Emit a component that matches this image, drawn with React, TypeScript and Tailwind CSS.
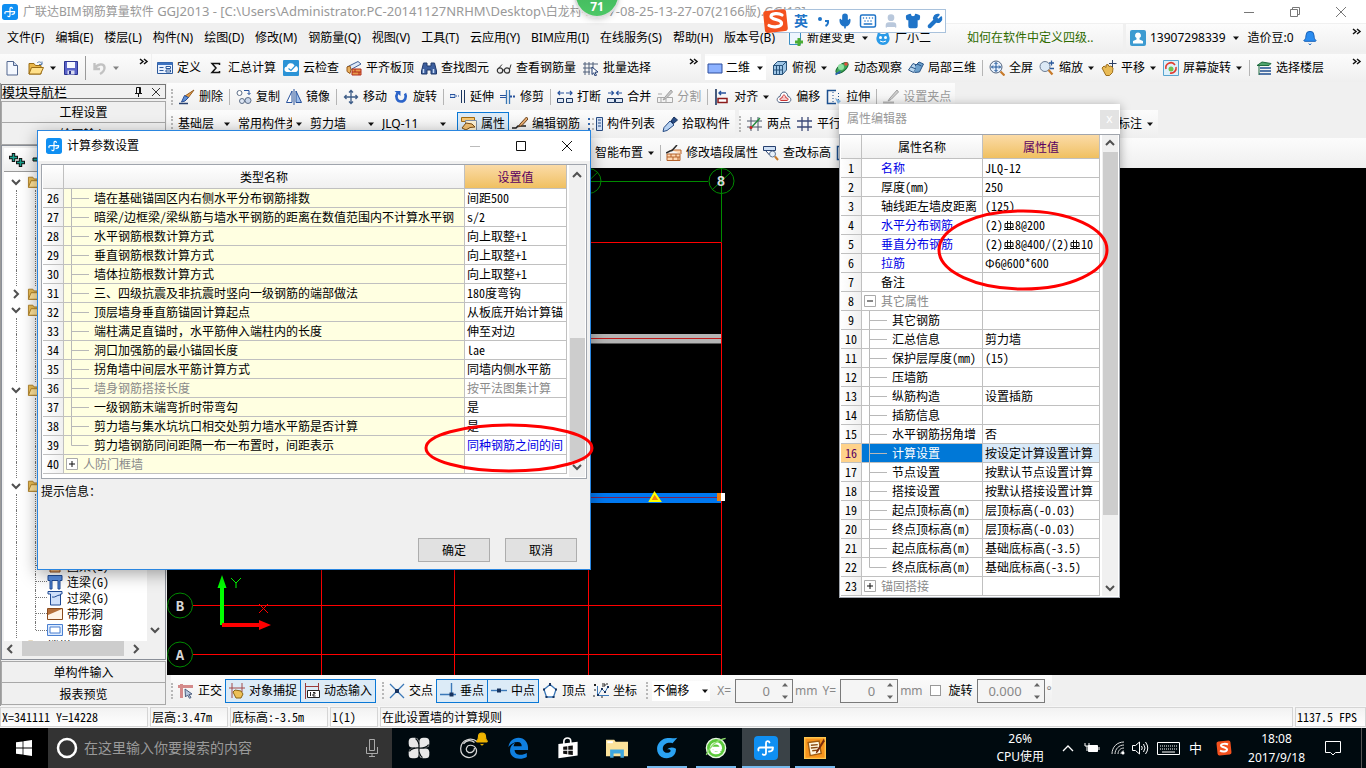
import type { ReactNode } from "react";
import { Mic, Shirt, Wrench, Keyboard, User, Bell } from "lucide-react";

const SONG = "font-['Noto_Sans_Mono_CJK_SC','Noto_Sans_CJK_SC',monospace]";

/* 16x16 toolbar glyphs */
const icons: Record<string, ReactNode> = {
  doc: <><path d="M3 1.500h6.500l4 4v9.500H3z" fill="#f4f8ff" stroke="#52678f" /><path d="M9.500 1.500v4h4" fill="#c8d6ee" stroke="#52678f" /></>,
  folder: <><path d="M1 3.500h5l1.500 2H13V14H1z" fill="#e8b64a" stroke="#9a6c14" /><path d="M3.500 7.500h12L12.500 14H1z" fill="#ffe08a" stroke="#9a6c14" /><path d="M9 3c2-2 4-1 5 1m0-2.500V4.500h-3" fill="none" stroke="#5a7fae" /></>,
  branch: <><path d="M.5 2.500h5l1.500 2h6V14H.5z" fill="#e9bd55" stroke="#a87a22" /><path d="M3.500 6.500h12L12.500 14H.5z" fill="#ffe39a" stroke="#a87a22" /></>,
  save: <><path d="M1.500 1.500h13v13h-13z" fill="#5a63c8" stroke="#2b3390" /><path d="M4 2h8v6H4z" fill="#f6f8ff" /><path d="M4.500 10.500h7v4h-7z" fill="#d8dcf0" /><path d="M6 11h2v3H6z" fill="#2b3390" /></>,
  undo: <path d="M2.500 3v6h5.500M3 8.500c2-5 9-5.500 9.500-1 .3 3-2 5-4.500 6.500" fill="none" stroke="#c2c2c2" strokeWidth="2.400" />,
  define: <><path d="M.5 2.500h15v11H.5z" fill="#eaf2ff" stroke="#2d5a9c" /><path d="M.5 2.500h15v2.500H.5z" fill="#3e73c0" /><path d="M2.500 7.500h4m-4 3h4" stroke="#2d5a9c" /><path d="M9 6.500h4.500v2H9zM9 10h4.500v2H9z" fill="#fff" stroke="#2d5a9c" /></>,
  sigma: <path d="M11.500 5V3.500H4L8 8l-4 4.500h7.500V11" fill="none" stroke="#111" strokeWidth="1.500" />,
  cloud: <><rect width="16" height="16" rx="1" fill="#2b93d6" /><path d="M3.500 12a2.800 2.800 0 0 1 .4-5.500 4 4 0 0 1 7.600-.8A3.200 3.200 0 0 1 12.500 12z" fill="#fff" /><path d="M5.500 8.500l2.500 2L14 4" fill="none" stroke="#2b93d6" strokeWidth="1.200" /></>,
  slab: <><path d="M1 7L12 1.500 15 4 5 9.500z" fill="#dfe9f7" stroke="#3f5f96" /><path d="M6 9h9v6H6z" fill="#e79a4a" stroke="#b22a1c" /><path d="M6 12h9m-6-3v3m4 0v3" stroke="#b22a1c" /><path d="M1 7l3-1 1 3.500-1 4-3-2z" fill="#e8b060" stroke="#9a5c1c" /></>,
  binoculars: <><path d="M2.500 3h3.500v3h4V3h3.500l2 8v3h-5.500v-4H6v4H.5v-3z" fill="#3d5f9e" stroke="#213a6b" /><path d="M2.500 9v4m10-4v4" stroke="#c7d9f5" strokeWidth="1.500" /></>,
  glasses: <><circle cx="4" cy="10.500" r="2.700" fill="#eee" stroke="#333" strokeWidth="1.200" /><circle cx="11" cy="10.500" r="2.700" fill="#eee" stroke="#333" strokeWidth="1.200" /><path d="M6.500 10h2M2 9l4-4.500M13.500 9.500L15 4.500" stroke="#333" /></>,
  batch: <><path d="M2 2v13M6 2v13M10 2v7M0 4h15M0 8h10M0 12h7" stroke="#50607a" /><path d="M9 7l6 5-3 .3 1.500 3-1.500.6-1.300-3L9 14.500z" fill="#fff" stroke="#1f3a70" /></>,
  rect: <path d="M1 4h14v9H1z" fill="#8db2ff" stroke="#2c4c9c" />,
  cube: <><path d="M1.500 5.500L5.500 1.500h9v8.500l-4 4.500h-9z" fill="#9fc6e6" stroke="#27527a" /><path d="M1.500 5.500h9v9M10.500 5.500l4-4M4.500 5.500v9m3-9v9M1.500 10h9" fill="none" stroke="#27527a" /></>,
  orbit: <><ellipse cx="8" cy="8" rx="7.500" ry="3.500" transform="rotate(-40 8 8)" fill="#3fa85a" stroke="#1a6a32" /><circle cx="7" cy="7" r="3" fill="#8fe0a0" /><path d="M1.500 14.500l5-3" stroke="#2b61ad" strokeWidth="2" /><circle cx="12" cy="4" r="1.800" fill="#e34b3c" /></>,
  local3d: <><path d="M.5 10L5 3.500l5 2-4.500 7z" fill="#b9d6ef" stroke="#2b5687" /><path d="M7 6l4-4 4.500 2-4 8-5 .5" fill="#6da0cc" stroke="#2b5687" /><path d="M3 7l5 2m1-5l4.500 2" stroke="#2b5687" /></>,
  full: <><circle cx="7" cy="7" r="6" fill="#e7f0fb" stroke="#53657f" /><path d="M7 2.500v9M2.500 7h9M5.500 4L7 2.500 8.500 4m-3 6L7 11.500 8.500 10M4 5.500L2.500 7 4 8.500m6-3L11.500 7 10 8.500" fill="none" stroke="#1c5599" /><path d="M11.500 11.500l4 4" stroke="#c77a2a" strokeWidth="2.200" /></>,
  zoom: <><circle cx="6" cy="6.500" r="5" fill="#dbe9f6" stroke="#6a7b92" /><path d="M9.500 10l4 4.500" stroke="#c77a2a" strokeWidth="2.200" /><path d="M10 3h5m-2.500-2.500v5M11 8.500h4" stroke="#2b5a9c" strokeWidth="1.300" /></>,
  hand: <><path d="M1 8l2-2 2 1.500V5l2-.5 1 2 2-.5 2 2-.5 4.500-3 3H5z" fill="#e9bb55" stroke="#9d6e1c" /><path d="M11.500 0v7M8 3.500h7.500" stroke="#2d3f63" /></>,
  screenrot: <><path d="M.5.5h15v15H.5z" fill="#dff0fa" stroke="#58a5d0" /><path d="M3 9a5 5 0 0 1 9-4M13 7a5 5 0 0 1-6 6" fill="none" stroke="#e03b2e" strokeWidth="1.600" /><circle cx="8" cy="9" r="2.500" fill="#72c24f" /></>,
  floors: <><path d="M1 5.500L6 2l9 1.500-2 2z" fill="#4ea36c" stroke="#1f6b40" /><path d="M4 8h11M4 11h11M3 14h12" stroke="#1f4f90" strokeWidth="1.600" /><path d="M3 6v9" stroke="#1f6b40" /></>,
  del: <><path d="M15 1l-6 8-3-2z" fill="#e6a14c" stroke="#945c20" /><path d="M9.500 8.500L6 12 2.500 13 5.500 6.500z" fill="#5d8ed6" stroke="#2b4f94" /><path d="M0 14.500h9" stroke="#27406f" strokeWidth="1.500" /></>,
  copy: <><circle cx="3.500" cy="4" r="2.500" fill="#fff" stroke="#5d6e88" /><circle cx="6" cy="12" r="2.500" fill="#dfe8f5" stroke="#5d6e88" /><circle cx="12" cy="11.500" r="3" fill="#c9d6ea" stroke="#5d6e88" /><path d="M8 1.500h5v4m-1.500-1.500L13 5.500 14.500 4" fill="none" stroke="#27529c" /></>,
  mirror: <><path d="M6 2v11.500H.5z" fill="#fff" stroke="#27529c" /><path d="M10 2v11.500h5.500z" fill="#9dbde9" stroke="#27529c" /><path d="M8 0v16" stroke="#27529c" /></>,
  move: <path d="M8 1.500v13M1.500 8h13M6 3.500l2-2 2 2m-4 9l2 2 2-2M3.500 6l-2 2 2 2m9-4l2 2-2 2" fill="none" stroke="#3d5c87" strokeWidth="1.300" />,
  rotate: <><path d="M4.500 4C2 8 4 12.500 8 12.500s6-4.500 4-8" fill="none" stroke="#2c64c9" strokeWidth="2.600" /><path d="M1.500 2h6v5z" fill="#2c64c9" /></>,
  extend: <><path d="M0 5.500h5v3H0z" fill="#dbe7f7" stroke="#27529c" /><path d="M6 7h4" stroke="#27529c" strokeDasharray="1 1" /><path d="M11.500 1v13M14.500 1v13" stroke="#1b355f" /></>,
  trim: <><path d="M0 6.500h6m0 2H0" stroke="#27529c" /><path d="M6.500 1v14M9.500 1v14" stroke="#3a78b5" strokeWidth="1.300" /><path d="M10 7.500h6" stroke="#27529c" strokeWidth="2" strokeDasharray="2 1" /></>,
  break: <><path d="M1 4h6m2 0h6M3 2L1 4l2 2m10-4l2 2-2 2" fill="none" stroke="#27529c" strokeWidth="1.200" /><path d="M.5 9.500h6v4h-6zM9.500 9.500h6v4h-6z" fill="#dfe8f5" stroke="#1b355f" /></>,
  join: <><path d="M1 4h5m4 0h5M4.500 2l2 2-2 2m7-4l-2 2 2 2" fill="none" stroke="#27529c" strokeWidth="1.200" /><path d="M.5 9.500h7v4h-7zM8.500 9.500h7v4h-7z" fill="#dfe8f5" stroke="#1b355f" /></>,
  split: <><path d="M.5 8.500h15v5H.5zM4 8.500v5m5-5v5M1 5h4" fill="none" stroke="#a9a9a9" /><path d="M14 1L8 8l-2 3 3-1.500L15.500 3z" fill="#c9c9c9" stroke="#a0a0a0" /></>,
  align: <><path d="M2 0v16" stroke="#1b355f" strokeWidth="1.600" /><path d="M4 9.500h9v4H4z" fill="#fff" stroke="#8b1a1a" strokeWidth="1.500" /><path d="M12 4H5m2-2L5 4l2 2" fill="none" stroke="#27529c" strokeWidth="1.400" /></>,
  offset: <><path d="M4 13.500C0 13 .5 8 4 7.500 5 1.500 11 1.500 12 7.500c3.500.5 4 5.500 0 6z" fill="#fff" stroke="#4b5f80" /><path d="M5 11.500c-2-.5-1-3 1-2.500.5-4 3.500-4 4 0 2-.5 3 2 1 2.500z" fill="#f6c6c6" stroke="#cb3333" /></>,
  stretch: <><path d="M10 1.500H1.500v13H10" fill="none" stroke="#1b4f8f" strokeWidth="1.500" /><path d="M7 3v11M12.500 4v10" stroke="#1b4f8f" strokeDasharray="1 2" /><path d="M9 9l6 3-3 3z" fill="#7db0dd" /></>,
  grip: <><path d="M14 1L7 9l-2 3 3-1.500L15.500 3z" fill="#cfcfcf" stroke="#a0a0a0" /><path d="M0 13.500h11" stroke="#b5b5b5" strokeWidth="2" /></>,
  props: <><path d="M.5 1.500h13v4H.5z" fill="#f7c873" stroke="#a36a10" /><path d="M4.500 4.500h11v10h-11z" fill="#fff3d5" stroke="#7d8ea6" /><path d="M1 12l4-5 6 1 3 3-5 .5-4 2.500z" fill="#f3c173" stroke="#7a4c12" /></>,
  editbar: <><path d="M0 12h4l2-2h8" fill="none" stroke="#1d1d1d" strokeWidth="1.600" /><path d="M14.500 1L8 8l-1.500 3L10 9.500 16 3z" fill="#e8ad70" stroke="#6d4520" /></>,
  list: <><path d="M1 2h2v2H1zM1 7h2v2H1zM1 12h2v2H1z" fill="#3467ad" /><path d="M5 3h2m-2 5h2m-2 5h2" stroke="#888" /><path d="M9.500 1.500h6v13h-6z" fill="#d3e1f5" stroke="#274b83" /><path d="M11 4h3m-3 3h3m-3 3h3" stroke="#274b83" /></>,
  picker: <><path d="M9 5l3-4 3.500 3-4 3.500z" fill="#274b83" stroke="#16305c" /><path d="M8 5l4 4-7 5.500-4 1 1-4z" fill="#b7d2f2" stroke="#274b83" /></>,
  twopt: <><path d="M4 1v14M11 1v14M0 5h15M0 11h15" stroke="#4a5568" /><path d="M3 13L13 2" stroke="#258a3e" strokeWidth="1.500" /><circle cx="4" cy="11.500" r="1.500" fill="#c22" /></>,
  parallel: <path d="M5 1v14M11 1v14M0 5h15M0 11h15" stroke="#3d4a78" strokeWidth="1.300" />,
  wall: <><path d="M1 9h13v6.500H1zM5 5h10v4" fill="#ffd8b2" stroke="#b5622c" /><path d="M1 12h13M5 9v3m5-3v3m-3 0v3m5-3v3" stroke="#b5622c" /><path d="M11 0L6 5.500l-2 .5L0 8" fill="none" stroke="#2b2b2b" strokeWidth="1.500" /></>,
  level: <><path d="M.5 1.500h12v4h-12z" fill="#cfe0f5" stroke="#27406f" /><path d="M3 6l3.500 4L10 6" fill="#fff" stroke="#27406f" /><circle cx="9.500" cy="9" r="3" fill="#e8f1fb" stroke="#5f7492" /><path d="M12 11.500l3 3.500" stroke="#c77a2a" strokeWidth="2" /></>,
  newchange: <><path d="M2.500 1.500h11v13h-11z" fill="#eef6ff" stroke="#3b8fc4" /><path d="M8 10.500h2.500V8h3v2.500H16v3h-2.500V16h-3v-2.500H8z" fill="#4cae34" /></>,
  mascot: <><path d="M2 6l1-4 3 2h4l3-2 1 4c2 4-1 9-6 9S0 10 2 6z" fill="#2b9be8" /><circle cx="5.500" cy="7.500" r="1.500" fill="#fff" /><circle cx="10.500" cy="7.500" r="1.500" fill="#fff" /><path d="M5 11q3 2 6 0" stroke="#fff" fill="none" /></>,
  account: <><rect width="16" height="16" rx="2" fill="#3d9bd1" /><path d="M8 2.500a3 3 0 0 1 1.500 5.600V9.500L13 11v2.500H3V11l3.500-1.500V8.100A3 3 0 0 1 8 2.500z" fill="#fff" /></>,
  ortho: <><path d="M3.500 1v14M0 3.500h15" stroke="#d48a8a" strokeWidth="3" /><path d="M7 6l7 5-3 .5 2 3-1.500.8L9.500 12 7.500 14z" fill="#b7c7de" stroke="#4c5e7e" /></>,
  snap: <><path d="M3 0v15M13 0v9M0 5h16" stroke="#a34a4a" /><path d="M4 9l2-2 6 1 2 3-2 4H7z" fill="#edc056" stroke="#8a6414" /></>,
  dyn: <><path d="M1.500 0v16M14.500 0v7M1 3.500h14" stroke="#9b3b3b" /><path d="M3.500 7.500h12v7h-12z" fill="#fff" stroke="#222" /><path d="M6.500 9v4M9 9.500h2v1.500H9V13h2.500" fill="none" stroke="#222" /></>,
  cross: <><path d="M1 1l14 14M15 1L1 15" stroke="#3b78b8" strokeWidth="1.300" /><path d="M6 6h4v4H6z" fill="#17335f" /></>,
  perp: <><path d="M0 11.500h16M11.500 0v11" stroke="#3b78b8" strokeWidth="1.400" /><path d="M9.500 9.500h4v4h-4z" fill="#17335f" /></>,
  mid: <><path d="M0 7.500h16" stroke="#3b78b8" strokeWidth="1.400" /><path d="M6 5.500h4v4H6z" fill="#17335f" /></>,
  vertex: <><path d="M8 1.500l6 5-2.500 7.500h-7L2 6.500z" fill="#fff" stroke="#3b78b8" strokeWidth="1.300" /><path d="M7 0h2v3H7zM13 5.500h2v2h-2zM1 5.500h2v2H1zM3.500 13h2v2h-2zM10.500 13h2v2h-2z" fill="#17335f" /></>,
  coord: <><path d="M4.500 3v9.500H16M5 12l4-6 3 3 3-5" fill="none" stroke="#3b78b8" /><path d="M1 1l2 2M3 1L1 3M9 1h3v2H9M1 7h2M0 13h2M13 1h2M8 14h2" stroke="#222" /><path d="M4 11h2v2H4zM8 5h2v2H8zM11 8h2v2h-2zM14 3h2v2h-2z" fill="#17335f" /></>,
  edge: <path d="M1 7.300C1.600 3 4.600.5 8.300.5c4.400 0 7 3.300 7 7.300v1.600H5.500c.2 2.400 2 3.500 4.300 3.500 1.700 0 3.300-.5 4.600-1.300v3c-1.400.8-3.200 1.300-5.200 1.300-4 0-7-2.400-7-6 0-2.700 1.500-4.800 3.700-5.800-.7.900-1 1.800-1.100 2.700h5.900c0-2-.9-3.200-2.900-3.200C5 3.600 2.600 5.100 1 7.300z" fill="#0f7fe0" />,
  store: <><path d="M1 5l14-1.500v10L1 15.500z" fill="#fff" /><path d="M5 5V3c0-3 5-3 5 0v1.500" fill="none" stroke="#fff" strokeWidth="1.200" /><path d="M4.500 7l3-.3v2.600h-3zM8.200 6.600l3.300-.4v3.100H8.200zM4.500 10h3v2.600l-3-.4zM8.200 10h3.300v3.100l-3.300-.4z" fill="#111" /></>,
  explorer: <><path d="M0 2h6l1 1.500h9V14H0z" fill="#fbe29a" /><path d="M1 3h4v1.500H1z" fill="#fff" /><path d="M3 9h10v6h-2.500v-3h-5v3H3z" fill="#3ea6dd" /></>,
  fan: <><g fill="#e8e8e8"><rect x=".5" y=".5" width="7.200" height="7.200" rx="2.800" /><rect x="8.300" y=".5" width="7.200" height="7.200" rx="2.800" /><rect x=".5" y="8.300" width="7.200" height="7.200" rx="2.800" /><rect x="8.300" y="8.300" width="7.200" height="7.200" rx="2.800" /><path d="M5 5h6v6H5z" /></g><path d="M8 8C8.500 5 7 2 5.500 1M8 8c3 .5 6-1 7-2.500M8 8c-.5 3 1 6 2.500 7M8 8c-3-.5-6 1-7 2.500" fill="none" stroke="#0a1215" strokeWidth=".9" /></>,
  swirl: <path d="M14 3.500C10 0 2.500 1.500 2 8s6 8.500 10 5.500c3-3 1-7.500-3-7.500-3 0-4 4-1.500 5M12 8c0 3-3 4-5 3M4 5c2-3 6-3 8-1" fill="none" stroke="#d8d8d8" strokeWidth=".9" />,
  browserG: <path d="M15.500.5C11 1.500 9 0 5.500 1.500-.5 4.500-.5 12 4 14.500c4.500 2.500 11 0 10.500-6-2.500-1.500-5-1-6.500.5 2-.5 3 .5 2.500 1.500-1 1.500-5 1.500-5.500-1.500C4.500 5 9 3.500 12 4.500z" fill="#2aa2f2" />,
  browserE: <><circle cx="8" cy="8" r="7" fill="#5cc93c" stroke="#e9f7e4" /><path d="M12 9.500H6M4.500 8a3.500 3.500 0 0 1 7 0h-7c0 4 4 4.500 6.500 2.500" fill="none" stroke="#fff" strokeWidth="1.800" /><path d="M1 13C4 6 9 2 15 1" stroke="#8fe070" fill="none" /></>,
  notes: <><path d="M.5.5h15v15H.5z" fill="#f7941d" stroke="#ffc64d" /><path d="M3 4l8-1 1.500 9-8 1.500z" fill="#fff7e0" stroke="#a05c10" /><path d="M5 6l5-.5M5 8l5-.5M6 10l4-.5" stroke="#8a4a10" /><path d="M14.500 1L9 10l-.5 2L10 11l5-8z" fill="#7a2d0c" /></>,
};

function Icon({ name, className = "size-4" }: { name: string; className?: string }) {
  return (
    <svg viewBox="0 0 16 16" fill="none" className={`shrink-0 ${className}`} aria-hidden="true">
      {icons[name]}
    </svg>
  );
}

function AppLogo({ className = "size-4" }: { className?: string }) {
  return (
    <svg viewBox="0 0 24 24" className={`shrink-0 ${className}`} aria-hidden="true">
      <rect width="24" height="24" rx="4" fill="#0f8ff2" />
      <path d="M15.500 6.500c-.5-2-3.500-2-3.500.5v10c0 2-2 2.500-3.200 1.300M19 11.500H6.500c-2 0-2.500 1.500-2 3M19 11.500c0 2.500-1.500 4-4 4" fill="none" stroke="#fff" strokeWidth="1.800" strokeLinecap="round" />
    </svg>
  );
}

function Caret() {
  return (
    <svg viewBox="0 0 8 8" className="size-2 shrink-0" aria-hidden="true">
      <path d="M1 2.500h6L4 6z" fill="#111" />
    </svg>
  );
}

function More() {
  return (
    <svg viewBox="0 0 10 8" className="mb-3 h-2 w-2.5 shrink-0" aria-hidden="true">
      <path d="M1 1l3 2.500L1 6M5 1l3 2.500L5 6" fill="none" stroke="#111" strokeWidth="1.500" />
    </svg>
  );
}

function Chevron({ dir = "up" }: { dir?: "up" | "down" | "left" | "right" }) {
  const d = { up: "M2 8l4-4 4 4", down: "M2 4l4 4 4-4", left: "M8 2L4 6l4 4", right: "M4 2l4 4-4 4" }[dir];
  return (
    <svg viewBox="0 0 12 12" className="size-3 shrink-0" aria-hidden="true">
      <path d={d} fill="none" stroke="#505050" strokeWidth="2" />
    </svg>
  );
}

const Sep = () => <span className="h-4 w-px shrink-0 bg-[#b5b5b5]" />;

const Grip = () => <span className="h-4 w-0 shrink-0 border-l-2 border-dotted border-[#b8b8b8]" />;

type ToolProps = { icon?: string; label: string; caret?: boolean; off?: boolean; on?: boolean };

function Tool({ icon, label, caret, off, on }: ToolProps) {
  return (
    <button
      disabled={off}
      className={`flex shrink-0 items-center gap-1 whitespace-nowrap ${off ? "text-[#9a9a9a]" : ""} ${
        on ? "-mx-1 h-6 border border-[#0a78d6] bg-[#dcebf7] px-[3px]" : ""
      }`}
    >
      {icon && <Icon name={icon} />}
      {label}
      {caret && <Caret />}
    </button>
  );
}

function Combo({ label, value, className }: { label: string; value: string; className: string }) {
  return (
    <label className={`relative flex h-5 shrink-0 items-center ${className}`}>
      <select aria-label={label} className="w-full appearance-none overflow-hidden bg-transparent pr-3 leading-5 outline-none">
        <option>{value}</option>
      </select>
      <span className="pointer-events-none absolute right-px">
        <Caret />
      </span>
    </label>
  );
}

const band = "bg-linear-to-b from-[#fcfcfc] to-[#efefef]";

const menus = [
  "文件(F)", "编辑(E)", "楼层(L)", "构件(N)", "绘图(D)", "修改(M)", "钢筋量(Q)", "视图(V)", "工具(T)",
  "云应用(Y)", "BIM应用(I)", "在线服务(S)", "帮助(H)", "版本号(B)",
];

function TitleBar() {
  return (
    <header className="flex h-[23px] items-center bg-white pl-[2px] text-[#999]">
      <AppLogo />
      <h1 className="ml-[5px] flex-1 truncate">
        广联达BIM钢筋算量软件
        <span className="text-[13px]"> GGJ2013 - [C:\Users\Administrator.PC-20141127NRHM\Desktop\</span>
        白龙村
        <span className="text-[13px]">-2017-08-25-13-27-07(2166</span>版<span className="text-[13px]">).GGJ12]</span>
      </h1>
      <div className="flex gap-9 pr-5">
        <button aria-label="最小化"><svg viewBox="0 0 10 10" className="size-2.5"><path d="M0 5.500h10" stroke="#777" /></svg></button>
        <button aria-label="还原"><svg viewBox="0 0 10 10" className="size-2.5"><path d="M.5 2.500h7v7h-7zM2.500 2.500v-2h7v7h-2" fill="none" stroke="#777" /></svg></button>
        <button aria-label="关闭"><svg viewBox="0 0 10 10" className="size-2.5"><path d="M0 0l10 10M10 0L0 10" stroke="#777" /></svg></button>
      </div>
    </header>
  );
}

function MenuBar() {
  return (
    <nav className="flex h-[30px] items-center overflow-hidden">
      <div className="flex gap-[11px] pl-[7px]">
        {menus.map((m) => (
          <button key={m} className="whitespace-nowrap">{m}</button>
        ))}
      </div>
      <div className={`ml-3 flex h-7 flex-none items-center gap-[6px] pr-2 ${band}`}>
        <Tool icon="newchange" label="新建变更" />
        <Caret />
        <Tool icon="mascot" label="广小二" />
      </div>
      <div className={`flex h-7 flex-1 items-center pl-7 ${band}`}>
        <a href="#help" className="whitespace-nowrap text-[#2f6b00]">如何在软件中定义四级..</a>
      </div>
      <div className={`ml-[3px] flex h-7 w-[240px] items-center pl-1 ${band}`}>
        <Tool icon="account" label="13907298339" />
        <span className="ml-[6px]"><Caret /></span>
        <span className="ml-2 whitespace-nowrap">造价豆:0</span>
        <Bell className="ml-2 size-4 fill-[#2a8cf0] text-[#1b63b8]" strokeWidth={1.500} />
        <span className="ml-auto mr-1"><More /></span>
      </div>
    </nav>
  );
}

function MainToolbar() {
  return (
    <div className="flex h-[30px] items-center overflow-hidden">
      <div className={`flex h-7 w-[151px] shrink-0 items-center pl-1 ${band}`}>
        <button aria-label="新建"><Icon name="doc" /></button>
        <button aria-label="打开" className="ml-2"><Icon name="folder" /></button>
        <span className="ml-[5px]"><Caret /></span>
        <button aria-label="保存" className="ml-[6px]"><Icon name="save" /></button>
        <span className="ml-[6px] h-6 w-px bg-[#999]" />
        <button aria-label="撤销" className="ml-[6px]"><Icon name="undo" /></button>
        <span className="ml-1 opacity-50"><Caret /></span>
        <span className="ml-auto mr-[2px]"><More /></span>
      </div>
      <div className={`ml-px flex h-7 w-[549px] shrink-0 items-center gap-[7px] pl-[5px] ${band}`}>
        <Tool icon="define" label="定义" />
        <Tool icon="sigma" label="汇总计算" />
        <Tool icon="cloud" label="云检查" />
        <Tool icon="slab" label="平齐板顶" />
        <Tool icon="binoculars" label="查找图元" />
        <Tool icon="glasses" label="查看钢筋量" />
        <Tool icon="batch" label="批量选择" />
        <span className="ml-auto mr-[2px]"><More /></span>
      </div>
      <div className={`ml-1 flex h-7 flex-1 items-center gap-[6px] ${band}`}>
        <label className="relative flex h-6 w-[61px] items-center bg-white pl-[2px]">
          <Icon name="rect" />
          <select aria-label="视图模式" className="w-full appearance-none bg-transparent pl-[3px] outline-none">
            <option>二维</option>
          </select>
          <span className="pointer-events-none absolute right-[2px]"><Caret /></span>
        </label>
        <Tool icon="cube" label="俯视" caret />
        <Tool icon="orbit" label="动态观察" />
        <Tool icon="local3d" label="局部三维" />
        <Sep />
        <Tool icon="full" label="全屏" />
        <Tool icon="zoom" label="缩放" caret />
        <Tool icon="hand" label="平移" caret />
        <Tool icon="screenrot" label="屏幕旋转" caret />
        <Sep />
        <Tool icon="floors" label="选择楼层" />
        <span className="ml-auto mr-1"><More /></span>
      </div>
    </div>
  );
}

/* Tree rows: o = open branch, c = closed branch, "" = row behind the dialog */
const treeRows = [
  "o", "", "", "", "", "", "", "c", "o", "", "", "", "", "o", "", "", "", "", "", "o", "", "", "", "",
  "圈梁(E)", "连梁(G)", "过梁(G)", "带形洞", "带形窗", "c楼梯",
];

function LeafIcon({ index }: { index: number }) {
  if (index >= 27) {
    return (
      <svg viewBox="0 0 16 14" className="h-3.5 w-4 shrink-0" aria-hidden="true">
        <path d="M.5 1.500h15v11H.5z" fill={index === 27 ? "#fff4e6" : "#dcebff"} stroke={index === 27 ? "#8a4a1c" : "#4a7fd0"} />
        {index === 27 ? <path d="M1 2h14L1 8z" fill="#b5703a" /> : <path d="M3 4h10v6H3z" fill="#fff" stroke="#4a7fd0" />}
      </svg>
    );
  }
  return (
    <svg viewBox="0 0 16 16" className="size-4 shrink-0" aria-hidden="true">
      {index === 24 && <path d="M3 6h10v8H3z" fill="#f0b67c" stroke="#8a4a1c" />}
      {index === 25 && <path d="M1 1.500h14v5h-2V15h-2V6.500H5V15H3V6.500H1z" fill="#5b8fe0" stroke="#1f4a94" />}
      {index === 26 && <path d="M1 1.500h14V4h-1.500v11h-10V4H1zM5 7c3 1 5-2 8-2" fill="#cfe0fb" stroke="#1f4a94" />}
    </svg>
  );
}

function Sidebar() {
  return (
    <aside className={`flex w-[167px] shrink-0 flex-col border-l border-[#9a9a9a] pr-px ${SONG}`}>
      <div className="mt-px flex h-[15px] items-center border border-[#777] pr-1">
        <span className="flex-1 text-[13px] leading-[13px]">模块导航栏</span>
        <svg viewBox="0 0 10 10" className="mr-2 size-2.5"><path d="M2 6.500h7M3.500 6V.5h4V6M6.500.5V6M5.500 7v3" fill="none" stroke="#111" /></svg>
        <svg viewBox="0 0 10 10" className="size-2.5"><path d="M1 1l8 8M9 1L1 9" stroke="#333" /></svg>
      </div>
      <button className="mt-[2px] h-[22px] border border-[#a8a8a8] bg-[#f0f0f0]">工程设置</button>
      <button className="h-[22px] border border-t-0 border-[#a8a8a8] bg-[#f0f0f0]">绘图输入</button>
      <div className="flex min-h-0 flex-1 flex-col border border-[#8a8f98] bg-[#f0f0f0] p-[2px]">
        <div className="flex h-[23px] items-center gap-[6px] bg-linear-to-b from-white to-[#eee] pl-1">
          <svg viewBox="0 0 18 16" className="h-4 w-[18px] shrink-0">
            <path d="M1 5.500h9M5.500 1v9M8 10.500h9M12.500 6v9" stroke="#111" strokeWidth="3.400" />
            <path d="M2 5.500h7M5.500 2v7M9 10.500h7M12.500 7v7" stroke="#19a08c" strokeWidth="1.500" />
          </svg>
          <svg viewBox="0 0 12 6" className="h-[6px] w-3"><path d="M1 1h10v3H1z" fill="#19a08c" stroke="#111" /></svg>
        </div>
        <div className="flex min-h-0 flex-1 border-t border-[#9a9a9a]">
          <ul className="h-[469px] min-w-0 flex-1 overflow-hidden bg-white pl-[2px] pt-[2px]">
            {treeRows.map((row, i) => {
              const branch = row.startsWith("o") || row.startsWith("c");
              return (
                <li key={i} className="flex h-4 items-center">
                  {branch ? (
                    <>
                      <span className="flex w-[21px] items-center justify-end pr-[5px]">
                        {i < 29 && <Chevron dir={row === "o" ? "down" : "right"} />}
                      </span>
                      <Icon name="branch" className="h-3.5 w-4" />
                      <span className="pl-1">{row.slice(1)}</span>
                    </>
                  ) : (
                    <>
                      <span className="ml-[10px] h-4 w-[19px] border-l border-dotted border-[#777]" />
                      <span className={`w-[12px] border-l border-dotted border-[#777] ${i === 28 ? "mb-2 h-2" : "h-4"}`}>
                        {row && <span className={`block border-t border-dotted border-[#777] ${i === 28 ? "mt-2" : "mt-[7px]"}`} />}
                      </span>
                      {row && <LeafIcon index={i} />}
                      <span className="pl-1 leading-4">{row}</span>
                    </>
                  )}
                </li>
              );
            })}
          </ul>
          <div className="flex w-4 flex-col items-center justify-between py-1">
            <Chevron />
            <Chevron dir="down" />
          </div>
        </div>
        <div className="mr-4 flex h-[17px] items-center gap-[6px]">
          <Chevron dir="left" />
          <span className="h-[15px] w-[102px] bg-[#cdcdcd]" />
          <Chevron dir="right" />
        </div>
      </div>
      <button className="mt-px h-[22px] border border-[#a8a8a8] bg-[#f0f0f0]">单构件输入</button>
      <button className="mb-px h-[22px] border border-t-0 border-[#a8a8a8] bg-[#f0f0f0]">报表预览</button>
    </aside>
  );
}

function EditToolbars() {
  return (
    <>
      <div className={`flex h-[27px] w-fit items-center gap-[6px] pl-1 pr-1 ${band}`}>
        <Grip />
        <Tool icon="del" label="删除" />
        <Sep />
        <Tool icon="copy" label="复制" />
        <Tool icon="mirror" label="镜像" />
        <Sep />
        <Tool icon="move" label="移动" />
        <Tool icon="rotate" label="旋转" />
        <Sep />
        <Tool icon="extend" label="延伸" />
        <Tool icon="trim" label="修剪" />
        <Sep />
        <Tool icon="break" label="打断" />
        <Tool icon="join" label="合并" />
        <Tool icon="split" label="分割" off />
        <Sep />
        <Tool icon="align" label="对齐" caret />
        <Tool icon="offset" label="偏移" />
        <Tool icon="stretch" label="拉伸" />
        <Sep />
        <Tool icon="grip" label="设置夹点" off />
      </div>
      <div className="flex h-[28px] items-center">
        <div className={`flex h-full w-[568px] items-center pl-1 ${band}`}>
          <Grip />
          <Combo label="楼层" value="基础层" className="ml-[5px] w-[54px]" />
          <Combo label="构件分类" value="常用构件类" className="ml-[6px] w-[66px]" />
          <Combo label="构件类型" value="剪力墙" className="ml-[6px] w-[66px]" />
          <Combo label="构件" value="JLQ-11" className="ml-[6px] w-[66px]" />
          <span className="ml-[6px]"><Sep /></span>
          <div className="ml-[7px] flex gap-[7px]">
            <Tool icon="props" label="属性" on />
            <Tool icon="editbar" label="编辑钢筋" />
            <Tool icon="list" label="构件列表" />
            <Tool icon="picker" label="拾取构件" />
          </div>
        </div>
        <div className={`ml-1 flex h-full w-[419px] items-center gap-[6px] pr-1 ${band}`}>
          <Grip />
          <Tool icon="twopt" label="两点" />
          <Tool icon="parallel" label="平行" />
          <span className="ml-auto"><Tool label="标注" caret /></span>
        </div>
      </div>
      <div className={`flex h-[30px] items-center gap-[5px] pl-[428px] ${band}`}>
        <Tool label="智能布置" caret />
        <Sep />
        <Tool icon="wall" label="修改墙段属性" />
        <Tool icon="level" label="查改标高" />
        <Tool icon="stretch" label="" />
      </div>
    </>
  );
}

/* Axis grid and the selected wall segment */
function Canvas() {
  return (
    <div className="relative min-h-0 flex-1 overflow-hidden bg-black">
      <svg className="absolute left-0 top-0" width="1199" height="507" viewBox="167 168 1199 507">
        <path d="M421 181.500h287M721.500 168v74" stroke="#008a00" fill="none" />
        <path d="M421 334h300v9.500H421z" fill="#b4b4b4" />
        <path d="M421 338.500h300" stroke="#c01818" />
        <path d="M421 493h300v10H421z" fill="#0078f0" />
        <path d="M421 497.500h300" stroke="#802050" />
        <path d="M421 242.500h300.500V675M588.500 560v115M454.500 560v115M321.500 560v115M193 605.500h528M193 654.500h528" stroke="#f00" fill="none" />
        <path d="M717 493h4v8h-4z" fill="#f08010" />
        <path d="M721 493h4v8h-4z" fill="#fff" />
        <path d="M650 501l4.500-8 5.500 8z" fill="#f08010" stroke="#ff0" strokeWidth="2" />
        <g stroke="#008a00" fill="none">
          <circle cx="721.500" cy="181" r="12.500" />
          <circle cx="588.500" cy="181" r="12.500" />
          <circle cx="180" cy="605.500" r="12.500" />
          <circle cx="180" cy="654.500" r="12.500" />
          <path d="M712 190l19-18M579 190l19-18" />
        </g>
        <g fill="#d8d8d8" fontSize="14" fontFamily="Liberation Mono, monospace" fontWeight="bold" textAnchor="middle">
          <text x="721" y="186">8</text>
          <text x="180" y="611">B</text>
          <text x="180" y="660">A</text>
        </g>
        <path d="M220 625V588h-2.500l4.500-13 4.500 13H224v37z" fill="#0f0" />
        <path d="M222 623v4h37v3l12-5-12-5v3z" fill="#f00" />
        <path d="M231 578l5 5 5-5M236 583v5" stroke="#0f0" fill="none" />
        <path d="M259 604l9 9M268 604l-9 9" stroke="#f00" fill="none" />
      </svg>
    </div>
  );
}

function Spin({ label, value, className }: { label: string; value: string; className: string }) {
  return (
    <span className={`flex h-6 items-center border border-[#7a7a7a] bg-[#f5f5f5] pr-1 ${className}`}>
      <input aria-label={label} defaultValue={value} className="w-full min-w-0 bg-transparent pr-3 text-right text-[13px] text-[#888] outline-none" />
      <svg viewBox="0 0 6 16" className="h-4 w-[6px] shrink-0"><path d="M0 3.500L3 0l3 3.500zM0 12.500L3 16l3-3.500z" fill="#666" /></svg>
    </span>
  );
}

function SnapBar() {
  return (
    <div className="flex h-[31px] items-center pl-1">
      <div className={`flex h-full items-center ${band}`}>
        <Grip />
        <div className="ml-[5px] flex gap-[7px]">
          <Tool icon="ortho" label="正交" />
          <Tool icon="snap" label="对象捕捉" on />
          <Tool icon="dyn" label="动态输入" on />
        </div>
        <span className="ml-[10px]"><Grip /></span>
        <div className="ml-[5px] flex items-center gap-[7px]">
          <Tool icon="cross" label="交点" />
          <Tool icon="perp" label="垂点" on />
          <Tool icon="mid" label="中点" on />
          <Tool icon="vertex" label="顶点" />
          <Tool icon="coord" label="坐标" />
        </div>
        <span className="ml-[9px]"><Grip /></span>
        <Combo label="偏移方式" value="不偏移" className="ml-1 w-[58px] bg-white pl-[1px]" />
        <span className="ml-1"><Sep /></span>
        <span className="ml-[3px] text-[#888]">X=</span>
        <Spin label="X 偏移" value="0" className="ml-1 w-[58px]" />
        <span className="ml-[2px] text-[#888]">mm</span>
        <span className="ml-[5px] text-[#888]">Y=</span>
        <Spin label="Y 偏移" value="0" className="ml-1 w-[58px]" />
        <span className="ml-[2px] text-[#888]">mm</span>
        <span className="ml-[3px]"><Sep /></span>
        <label className="ml-1 flex items-center gap-2">
          <input type="checkbox" className="size-[11px] appearance-none border border-[#999] bg-white" />
          旋转
        </label>
        <Spin label="旋转角度" value="0.000" className="ml-1 w-[68px]" />
        <span className="ml-[2px] text-[#888]">°</span>
      </div>
    </div>
  );
}

type Row = { n: number; name: string; value: ReactNode; kind?: "plain" | "last" | "group"; tone?: "blue" | "gray"; open?: boolean; active?: boolean };

const calcRows: Row[] = [
  { n: 26, name: "墙在基础锚固区内右侧水平分布钢筋排数", value: "间距500" },
  { n: 27, name: "暗梁/边框梁/梁纵筋与墙水平钢筋的距离在数值范围内不计算水平钢", value: "s/2" },
  { n: 28, name: "水平钢筋根数计算方式", value: "向上取整+1" },
  { n: 29, name: "垂直钢筋根数计算方式", value: "向上取整+1" },
  { n: 30, name: "墙体拉筋根数计算方式", value: "向上取整+1" },
  { n: 31, name: "三、四级抗震及非抗震时竖向一级钢筋的端部做法", value: "180度弯钩" },
  { n: 32, name: "顶层墙身垂直筋锚固计算起点", value: "从板底开始计算锚" },
  { n: 33, name: "端柱满足直锚时，水平筋伸入端柱内的长度", value: "伸至对边" },
  { n: 34, name: "洞口加强筋的最小锚固长度", value: "lae" },
  { n: 35, name: "拐角墙中间层水平筋计算方式", value: "同墙内侧水平筋" },
  { n: 36, name: "墙身钢筋搭接长度", value: <span className="text-[#8a8a8a]">按平法图集计算</span>, tone: "gray" },
  { n: 37, name: "一级钢筋末端弯折时带弯勾", value: "是" },
  { n: 38, name: "剪力墙与集水坑坑口相交处剪力墙水平筋是否计算", value: "是" },
  { n: 39, name: "剪力墙钢筋同间距隔一布一布置时，间距表示", value: <span className="text-[#0000e6]">同种钢筋之间的间</span>, kind: "last" },
  { n: 40, name: "人防门框墙", value: "", kind: "group", tone: "gray" },
];

/* HRB400 bar mark, which has no code point of its own */
const Bar = () => (
  <svg viewBox="0 0 12 12" className="inline-block size-3 align-[-2px]" role="img" aria-label="HRB400">
    <path d="M2 3.500h8v4H2zM4.500 1v9M7.500 1v9M1 9.500h10" fill="none" stroke="#111" />
  </svg>
);

const propRows: Row[] = [
  { n: 1, name: "名称", value: "JLQ-12", kind: "plain", tone: "blue" },
  { n: 2, name: "厚度(mm)", value: "250", kind: "plain" },
  { n: 3, name: "轴线距左墙皮距离", value: "(125)", kind: "plain" },
  { n: 4, name: "水平分布钢筋", value: <>(2)<Bar />8@200</>, kind: "plain", tone: "blue" },
  { n: 5, name: "垂直分布钢筋", value: <>(2)<Bar />8@400/(2)<Bar />10</>, kind: "plain", tone: "blue" },
  { n: 6, name: "拉筋", value: "Φ6@600*600", kind: "plain", tone: "blue" },
  { n: 7, name: "备注", value: "", kind: "plain" },
  { n: 8, name: "其它属性", value: "", kind: "group", tone: "gray", open: true },
  { n: 9, name: "其它钢筋", value: "" },
  { n: 10, name: "汇总信息", value: "剪力墙" },
  { n: 11, name: "保护层厚度(mm)", value: "(15)" },
  { n: 12, name: "压墙筋", value: "" },
  { n: 13, name: "纵筋构造", value: "设置插筋" },
  { n: 14, name: "插筋信息", value: "" },
  { n: 15, name: "水平钢筋拐角增", value: "否" },
  { n: 16, name: "计算设置", value: "按设定计算设置计算", active: true },
  { n: 17, name: "节点设置", value: "按默认节点设置计算" },
  { n: 18, name: "搭接设置", value: "按默认搭接设置计算" },
  { n: 19, name: "起点顶标高(m)", value: "层顶标高(-0.03)" },
  { n: 20, name: "终点顶标高(m)", value: "层顶标高(-0.03)" },
  { n: 21, name: "起点底标高(m)", value: "基础底标高(-3.5)" },
  { n: 22, name: "终点底标高(m)", value: "基础底标高(-3.5)", kind: "last" },
  { n: 23, name: "锚固搭接", value: "", kind: "group", tone: "gray" },
];

function Lead({ row }: { row: Row }) {
  if (row.kind === "plain") return <span className="w-[19px] shrink-0" />;
  if (row.kind === "group") {
    return (
      <button aria-label={row.name} className="ml-[2px] mr-[5px] size-3 shrink-0">
        <svg viewBox="0 0 12 12" className="size-3">
          <path d="M.5.500h11v11H.5z" fill="#fff" stroke="#aaa" />
          <path d={row.open ? "M3 6h6" : "M3 6h6M6 3v6"} stroke="#111" />
        </svg>
      </button>
    );
  }
  return (
    <svg viewBox="0 0 30 18" className="h-[18px] w-[30px] shrink-0" aria-hidden="true">
      <path d={row.kind === "last" ? "M7.500 0v9.500h17" : "M7.500 0v18M8 9.500h17"} fill="none" stroke="#b8b8b8" />
    </svg>
  );
}

function Grid({ rows, heads, cream, numW, valueW }: { rows: Row[]; heads: [string, string]; cream?: boolean; numW: string; valueW: string }) {
  const line = "border-b border-r border-[#c0c0c0] p-0";
  return (
    <table className="min-w-0 flex-1 table-fixed border-separate border-spacing-0">
      <thead>
        <tr className="h-6">
          <th className={`${line} ${numW} bg-linear-to-b from-white to-[#f0f0f0]`} />
          <th className={`${line} bg-linear-to-b from-white to-[#f0f0f0] font-normal`}>{heads[0]}</th>
          <th className={`${line} ${valueW} bg-linear-to-b from-[#fbdba6] to-[#f0c060] font-normal text-[#5a0060]`}>{heads[1]}</th>
        </tr>
      </thead>
      <tbody>
        {rows.map((r) => (
          <tr key={r.n} className="h-[19px]">
            <td className={`${line} text-center leading-[18px] ${r.active ? "bg-[#ffd28a] text-[#5a0060]" : "bg-linear-to-r from-white to-[#f0f0f0]"}`}>{r.n}</td>
            <td
              className={`${line} ${r.active ? "bg-[#0078d7] text-white" : cream ? "bg-[#ffffe1]" : "bg-white"} ${
                r.tone === "blue" ? "text-[#0000e6]" : r.tone === "gray" ? "text-[#8a8a8a]" : ""
              }`}
            >
              <div className="flex h-[18px] items-center overflow-hidden whitespace-nowrap leading-[18px]">
                <Lead row={r} />
                {r.name}
              </div>
            </td>
            <td className={`${line} ${r.active ? "bg-[#d9eaf9]" : "bg-white"}`}>
              <div className="h-[18px] overflow-hidden whitespace-nowrap pl-[2px] leading-[18px]">{r.value}</div>
            </td>
          </tr>
        ))}
      </tbody>
    </table>
  );
}

function CalcDialog() {
  return (
    <section role="dialog" aria-label="计算参数设置" className="absolute left-[37px] top-[130px] w-[554px] border border-[#2a86e0] bg-[#f0f0f0] shadow-[0_4px_16px_rgba(0,0,0,0.35)]">
      <div className="flex h-[30px] items-center bg-white pl-2 pr-[18px]">
        <AppLogo />
        <h2 className="ml-[5px] flex-1">计算参数设置</h2>
        <div className="flex items-center gap-9">
          <svg viewBox="0 0 10 10" className="size-2.5"><path d="M0 5.500h10" stroke="#bbb" /></svg>
          <button aria-label="最大化"><svg viewBox="0 0 10 10" className="size-2.5"><path d="M.5.500h9v9h-9z" fill="none" stroke="#111" /></svg></button>
          <button aria-label="关闭"><svg viewBox="0 0 10 10" className="size-2.5"><path d="M0 0l10 10M10 0L0 10" stroke="#111" /></svg></button>
        </div>
      </div>
      <div className={SONG}>
        <div className="mx-[3px] mt-[3px] flex border border-[#a0a5ad] bg-white pb-1 pl-px">
          <Grid rows={calcRows} heads={["类型名称", "设置值"]} cream numW="w-[21px]" valueW="w-[102px]" />
          <div className="-mb-[3px] ml-[2px] mr-px flex w-4 flex-col items-center bg-[#f0f0f0] py-1">
            <Chevron />
            <span className="mt-auto h-[123px] w-[15px] bg-[#cdcdcd]" />
            <Chevron dir="down" />
          </div>
        </div>
        <p className="mt-[3px] pl-[3px] leading-[18px]">提示信息：</p>
        <div className="mb-[7px] mt-[38px] flex justify-end gap-[15px] pr-[13px]">
          <button className="h-6 w-[72px] border border-[#adadad] bg-[#e1e1e1]">确定</button>
          <button className="h-6 w-[72px] border border-[#adadad] bg-[#e1e1e1]">取消</button>
        </div>
      </div>
    </section>
  );
}

function PropertyPanel() {
  return (
    <section aria-label="属性编辑器" className="absolute left-[839px] top-[104px] w-[281px] bg-white shadow-[0_2px_10px_rgba(0,0,0,0.35)]">
      <div className="flex h-[30px] items-center pl-2 pr-px text-[#999]">
        <h2 className="flex-1">属性编辑器</h2>
        <button className="size-[19px] bg-[#e3e3e3] leading-4 text-white">x</button>
      </div>
      <div className={`flex border border-[#a0a5ad] pb-px pl-px ${SONG}`}>
        <Grid rows={propRows} heads={["属性名称", "属性值"]} numW="w-[21px]" valueW="w-[117px]" />
        <div className="ml-[2px] mr-px flex w-4 flex-col items-center bg-[#f0f0f0] py-[2px]">
          <Chevron />
          <span className="mt-[3px] h-[363px] w-[15px] bg-[#cdcdcd]" />
          <span className="mt-auto"><Chevron dir="down" /></span>
        </div>
      </div>
    </section>
  );
}

function ImeBar() {
  return (
    <div className="absolute left-[762px] top-[8px] flex items-center">
      <svg viewBox="0 0 28 26" className="z-10 h-[26px] w-7">
        <rect x="2" y="2" width="23" height="22" rx="3" fill="#f4511e" transform="rotate(-6 14 13)" />
        <path d="M20 7c-3-2-11-2-11 1.500S19 11 19.500 15 11 20 7 17.500" fill="none" stroke="#fff" strokeWidth="3.200" strokeLinecap="round" />
      </svg>
      <div className="-ml-4 flex h-6 items-center gap-[6px] border border-[#a9c2dc] bg-white pl-[18px] pr-[2px] text-[#1f74c8]">
        <span className="w-4 text-center text-[14px] font-bold">英</span>
        <svg viewBox="0 0 16 16" className="size-4"><circle cx="5" cy="6" r="2" fill="#1f74c8" /><path d="M10 8h3c.3 2-.5 4-2.500 5" fill="none" stroke="#1f74c8" strokeWidth="2" /></svg>
        <Mic className="size-4 fill-[#1f74c8]" strokeWidth={2.500} />
        <Keyboard className="size-[18px]" strokeWidth={2} />
        <User className="size-4 fill-[#b9c8dc] text-[#b9c8dc]" />
        <Shirt className="size-4 fill-[#1f74c8]" />
        <Wrench className="size-4 fill-[#1f74c8]" />
      </div>
    </div>
  );
}

const apps = ["fan", "swirl", "edge", "store", "explorer", "browserG", "browserE", "app", "notes"];

function Taskbar() {
  return (
    <footer className="flex h-10 items-center bg-[#000a0f] text-white">
      <button aria-label="开始" className="flex w-12 items-center justify-center self-stretch bg-black">
        <svg viewBox="0 0 16 16" className="size-4"><path d="M0 2.300L6.600 1.400v6.200H0zM7.400 1.300L16 0v7.600H7.400zM0 8.400h6.600v6.200L0 13.700zM7.400 8.400H16V16l-8.600-1.300z" fill="#fff" /></svg>
      </button>
      <label className="flex w-[344px] items-center self-stretch bg-[#333] pl-2 pr-[14px]">
        <svg viewBox="0 0 22 22" className="size-[22px] shrink-0"><circle cx="11" cy="11" r="9" fill="none" stroke="#fff" strokeWidth="2.500" /></svg>
        <input aria-label="搜索" placeholder="在这里输入你要搜索的内容" className="ml-[6px] min-w-0 flex-1 bg-transparent text-[14px] outline-none placeholder:text-[#9a9a9a]" />
        <svg viewBox="0 0 12 18" className="h-[18px] w-3"><path d="M3.500.500h5v11h-5zM.5 8v6.500h11V8M6 14.500v3M3 17.500h6" fill="none" stroke="#aaa" /></svg>
      </label>
      <div className="ml-[3px] flex w-[444px] justify-between self-stretch">
        {apps.map((name, i) => (
          <button key={name} aria-label={name} className={`relative flex w-12 items-center justify-center ${name === "app" ? "bg-[#3a4247]" : ""}`}>
            {name === "app" ? <AppLogo className="size-6" /> : <Icon name={name} className="size-[22px]" />}
            {name === "swirl" && <Bell className="absolute right-1 top-1 size-3.5 fill-[#f0b400] text-[#f0b400]" />}
            {i > 4 && <span className={`absolute bottom-0 h-[2px] bg-[#76b9ed] ${name === "app" ? "w-12" : "w-10"}`} />}
          </button>
        ))}
      </div>
      <div className="ml-auto flex items-center">
        <div className="text-center leading-[18px]">26%<br />CPU使用</div>
        <svg viewBox="0 0 12 8" className="ml-[18px] h-2 w-3"><path d="M1 7l5-5 5 5" fill="none" stroke="#fff" strokeWidth="1.300" /></svg>
        <svg viewBox="0 0 16 12" className="ml-[10px] h-3 w-4"><path d="M4.500 3.500h9v6h-9z" fill="#fff" stroke="#fff" /><path d="M15 5v3M1 1v3h4V1M3 4v5" stroke="#fff" fill="none" /></svg>
        <svg viewBox="0 0 14 14" className="ml-[11px] size-3.5"><path d="M1 13C1 6 6 1 13 1M4 13c0-5 4-9 9-9M7 13c0-3.500 2.500-6 6-6M10 13c0-2 1-3 3-3" fill="none" stroke="#ddd" /><circle cx="12" cy="12" r="1.500" fill="#fff" /></svg>
        <svg viewBox="0 0 17 14" className="ml-[7px] h-3.5 w-[17px]"><path d="M.5 4.500h3l4-3.500v12l-4-3.500h-3zM9.500 5q1.500 2 0 4M11.500 3q3 4 0 8M13.500 1q4.500 6 0 12" fill="none" stroke="#fff" /></svg>
        <svg viewBox="0 0 23 13" className="ml-2 h-[13px] w-[23px]"><path d="M.5.500h22v12H.5z" fill="none" stroke="#fff" /><path d="M3 4h17M3 7h17" stroke="#fff" strokeDasharray="1 1" /><path d="M5 10h13" stroke="#fff" /></svg>
        <span className="ml-[9px] text-[13px]">中</span>
        <svg viewBox="0 0 16 16" className="ml-[14px] size-4"><rect x="1" y="1" width="14" height="14" rx="2" fill="#f4511e" transform="rotate(-6 8 8)" /><path d="M12 4.500c-2-1-7-1-7 1s6 1.500 6 4-5 2.500-7 1" fill="none" stroke="#fff" strokeWidth="2" /></svg>
        <div className="ml-4 text-center leading-[19px]">18:08<br />2017/9/18</div>
        <svg viewBox="0 0 16 16" className="ml-5 size-4"><path d="M.5 1.500h15v11h-5L8 15l-2.500-2.500h-5z" fill="none" stroke="#fff" /></svg>
        <span className="ml-5 mr-1 h-10 w-px bg-[#555]" />
      </div>
    </footer>
  );
}

function StatusBar() {
  const cell = "flex h-5 items-center border border-[#d5d5d5] bg-linear-to-b from-[#f2f2f2] to-white pl-[1px] whitespace-nowrap";
  return (
    <div className={`flex h-[22px] items-center gap-[2px] bg-[#f6f6f6] ${SONG}`}>
      <span className={`${cell} w-[148px]`}>X=341111 Y=14228</span>
      <span className={`${cell} w-[78px]`}>层高:3.47m</span>
      <span className={`${cell} w-[98px]`}>底标高:-3.5m</span>
      <span className={`${cell} w-[48px]`}>1(1)</span>
      <span className={`${cell} flex-1`}>在此设置墙的计算规则</span>
      <span className={`${cell} w-[71px]`}>1137.5 FPS</span>
    </div>
  );
}

export default function App() {
  return (
    <div className="relative flex h-screen min-h-[600px] flex-col overflow-hidden bg-[#f0f0f0] font-['Noto_Sans','Noto_Sans_CJK_SC',sans-serif] text-[12px] leading-4 text-black">
      <TitleBar />
      <MenuBar />
      <MainToolbar />
      <div className="flex min-h-0 flex-1">
        <Sidebar />
        <main className="flex min-w-0 flex-1 flex-col">
          <EditToolbars />
          <Canvas />
          <SnapBar />
        </main>
      </div>
      <StatusBar />
      <Taskbar />

      <PropertyPanel />
      <CalcDialog />

      {/* Speed ball and input method bar float over the title */}
      <div className="absolute left-[574px] top-[-28px] flex size-[46px] items-end justify-center rounded-full border-2 border-[#ddd] bg-linear-to-b from-[#3fae58] to-[#4cc866] pb-[3px] font-bold leading-3 text-white shadow-md">71</div>
      <ImeBar />

      {/* Markup rings */}
      <svg className="pointer-events-none absolute left-[423px] top-[422px]" width="172" height="52">
        <ellipse cx="86" cy="26" rx="83" ry="23" fill="none" stroke="#f00" strokeWidth="3" />
      </svg>
      <svg className="pointer-events-none absolute left-[936px] top-[207px]" width="176" height="86">
        <ellipse cx="87" cy="43" rx="84" ry="39" fill="none" stroke="#f00" strokeWidth="3" />
      </svg>
    </div>
  );
}
